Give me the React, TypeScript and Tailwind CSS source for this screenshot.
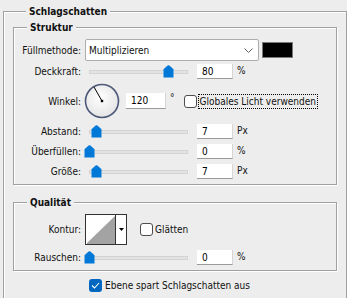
import React from "react"

const font = "font-['DejaVu_Sans_Condensed','DejaVu_Sans',sans-serif]"

function Label({ children }: { children: React.ReactNode }) {
  return <div className="w-[67px] shrink-0 text-right whitespace-nowrap">{children}</div>
}

function Slider({ frac }: { frac: number }) {
  // thumb sits over the track, its place comes from the value
  const left = 4 + frac * 99 - 5.5
  return (
    <div className="relative w-[104px] h-[15px] flex items-center shrink-0">
      <div className="ml-[4px] w-[99px] h-[4px] bg-[#e3e3e3] border border-[#d3d3d3]" />
      <svg className="absolute top-[1px]" style={{ left }} width="11" height="13" viewBox="0 0 11 13">
        <path d="M4.6 0.6 Q5.5 0 6.4 0.6 L10.5 4.2 V12.5 H0.5 V4.2 Z" fill="#0078d7" />
      </svg>
    </div>
  )
}

function NumField({ value }: { value: string }) {
  return (
    <div className="w-[36px] h-[15px] bg-white border-b border-r border-b-[#9a9a9a] border-r-[#d6d6d6] pl-[5px] leading-[15px] text-black">
      {value}
    </div>
  )
}

function SliderRow({ label, frac, value, unit, className }: { label: string; frac: number; value: string; unit: string; className: string }) {
  return (
    <div className={"flex items-center " + className}>
      <Label>{label}</Label>
      <div className="ml-[4px]">
        <Slider frac={frac} />
      </div>
      <div className="ml-[8px]">
        <NumField value={value} />
      </div>
      <div className="ml-[4px] -mt-[3px]">{unit}</div>
    </div>
  )
}

function Box() {
  return <div className="w-[13px] h-[13px] bg-white border border-[#4d4d4d] rounded-[3px] shrink-0" />
}

function Dial() {
  return (
    <svg width="36" height="36" viewBox="0 0 36 36" className="shrink-0">
      <defs>
        <radialGradient id="dialFill" cx="0.45" cy="0.4" r="0.6">
          <stop offset="0" stopColor="#ffffff" />
          <stop offset="1" stopColor="#e4e4e4" />
        </radialGradient>
      </defs>
      <circle cx="18" cy="18" r="16.5" fill="url(#dialFill)" stroke="#4c5878" strokeWidth="1.6" />
      <line x1="18" y1="18" x2="10" y2="4" stroke="#000" strokeWidth="1" />
      <rect x="16.8" y="16.8" width="2.4" height="2.4" fill="#000" />
    </svg>
  )
}

export default function App() {
  const fieldset = "border border-[#a0a0a0] shadow-[inset_1px_1px_0_#ffffff,1px_1px_0_#ffffff]"
  const legend = "ml-[13px] px-[3px] leading-[15px] font-bold bg-[#ededed]"

  return (
    <div className={"w-[347px] h-[298px] overflow-hidden bg-[#ededed] pl-[3px] text-[10px] text-[#111] " + font}>
      <fieldset className={"w-[344px] h-[330px] mt-[4px] px-[9px] " + fieldset}>
        <legend className={legend}>Schlagschatten</legend>

        {/* Struktur */}
        <fieldset className={"mt-[1px] pt-[4px] pb-[5px] " + fieldset}>
          <legend className={legend}>Struktur</legend>

          <div className="flex items-center h-[22px]">
            <Label>Füllmethode:</Label>
            <div className="ml-[4px] w-[174px] h-[22px] bg-white border border-[#adadad] rounded-[2px] flex items-center pl-[3px] pr-[5px]">
              <span className="flex-1">Multiplizieren</span>
              <svg width="9" height="5" viewBox="0 0 9 5">
                <path d="M0.5 0.5 L4.5 4.5 L8.5 0.5" fill="none" stroke="#606060" strokeWidth="1" />
              </svg>
            </div>
            <div className="ml-[3px] w-[31px] h-[16px] bg-black border border-[#7a7a7a]" />
          </div>

          <SliderRow className="mt-[3px]" label="Deckkraft:" frac={0.8} value="80" unit="%" />

          <div className="flex items-center mt-[4px] h-[36px]">
            <Label>Winkel:</Label>
            <div className="ml-[3px]">
              <Dial />
            </div>
            <div className="ml-[6px] w-[40px] h-[16px] bg-white border-b border-r border-b-[#9a9a9a] border-r-[#d6d6d6] pl-[5px] leading-[16px] text-black">
              120
            </div>
            <div className="ml-[4px] -mt-[8px]">°</div>
            <div className="ml-[9px] flex items-center">
              <Box />
              <span className="ml-[1px] px-[1px] border border-dotted border-black leading-[13px]">Globales Licht verwenden</span>
            </div>
          </div>

          <SliderRow className="mt-[5px]" label="Abstand:" frac={0.075} value="7" unit="Px" />
          <SliderRow className="mt-[5px]" label="Überfüllen:" frac={0} value="0" unit="%" />
          <SliderRow className="mt-[5px]" label="Größe:" frac={0.075} value="7" unit="Px" />
        </fieldset>

        {/* Qualität */}
        <fieldset className={"mt-[10px] pt-[4px] pb-[5px] " + fieldset}>
          <legend className={legend}>Qualität</legend>

          <div className="flex items-center h-[31px]">
            <Label>Kontur:</Label>
            <div className="ml-[4px] w-[42px] h-[31px] bg-white border border-[#333] flex">
              <svg width="29" height="29" viewBox="0 0 29 29" className="shrink-0">
                <path d="M1 28 L29 1 V29 H1 Z" fill="#a3a3a3" />
              </svg>
              <div className="flex-1 border-l border-[#333] flex items-center justify-center">
                <svg width="5" height="3" viewBox="0 0 5 3">
                  <path d="M0 0 H5 L2.5 3 Z" fill="#000" />
                </svg>
              </div>
            </div>
            <div className="ml-[13px] flex items-center">
              <Box />
              <span className="ml-[2px]">Glätten</span>
            </div>
          </div>

          <SliderRow className="mt-[5px]" label="Rauschen:" frac={0} value="0" unit="%" />
        </fieldset>

        <div className="flex items-center mt-[7px] ml-[76px]">
          <div className="w-[13px] h-[13px] bg-[#0067c0] rounded-[3px] flex items-center justify-center">
            <svg width="9" height="7" viewBox="0 0 9 7">
              <path d="M1 3.5 L3.5 6 L8 1" fill="none" stroke="#fff" strokeWidth="1.1" />
            </svg>
          </div>
          <span className="ml-[3px]">Ebene spart Schlagschatten aus</span>
        </div>
      </fieldset>
    </div>
  )
}
